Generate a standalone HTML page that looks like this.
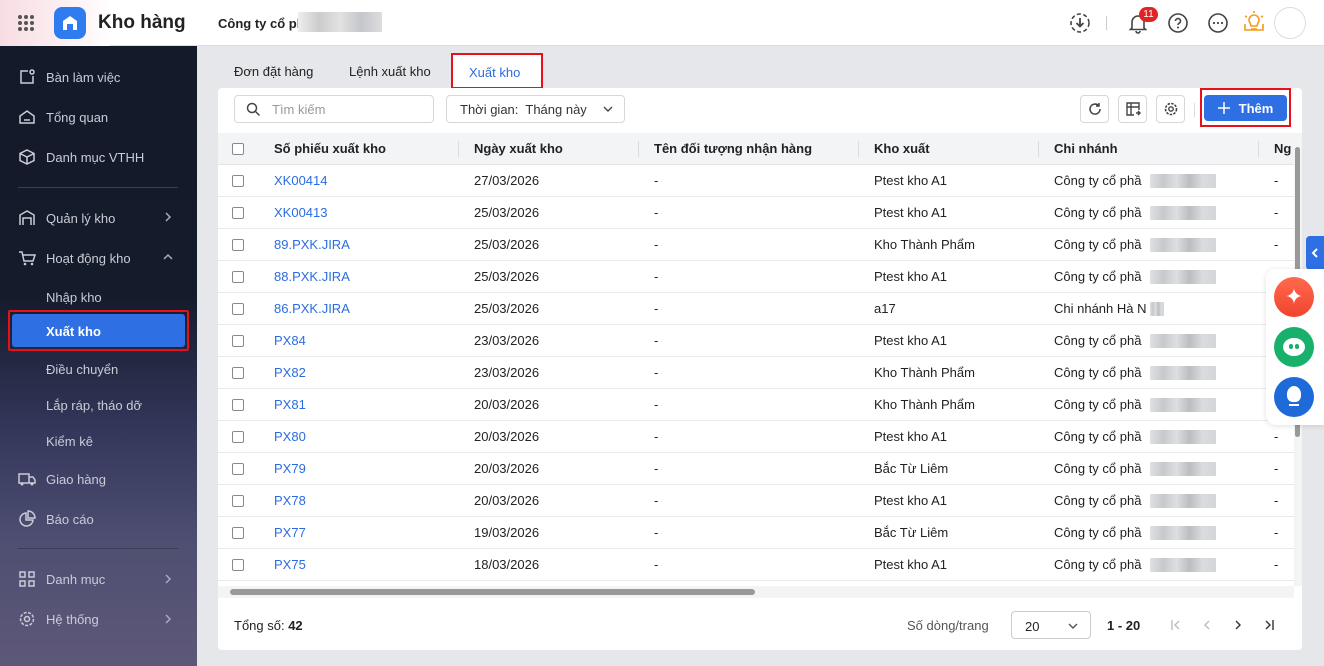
<!DOCTYPE html>
<html><head><meta charset="utf-8"><style>
*{box-sizing:border-box;margin:0;padding:0}
body{width:1324px;height:666px;overflow:hidden;font-family:"Liberation Sans","Noto Sans CJK SC",sans-serif;font-size:13px;color:#222;background:#e6e7ea;position:relative}
.top{position:absolute;left:0;top:0;width:1324px;height:46px;background:#fff;border-bottom:1px solid #ddd}
.blossom{position:absolute;left:0;top:0;width:110px;height:46px;background:linear-gradient(90deg,#f7dde3,#fdf3f5 70%,#fff)}
.side{position:absolute;left:0;top:46px;width:197px;height:620px;background:linear-gradient(180deg,#131a2a 0%,#141b2b 40%,#33375a 62%,#4e4f72 80%,#5e5878 100%)}
.si{position:absolute;left:18px;color:#c9ccd6;font-size:13px;display:flex;align-items:center}
.si svg{margin-right:10px}
.sub{position:absolute;left:46px;color:#c9ccd6;font-size:13px}
.hr{position:absolute;left:18px;width:160px;height:1px;background:#3a4052}
.chev{position:absolute;left:162px}
.card{position:absolute;left:218px;top:88px;width:1084px;height:562px;background:#fff;border-radius:4px}
.th{position:absolute;left:0;top:45px;width:1076px;height:32px;background:#f3f4f6;border-bottom:1px solid #e3e4e8;font-weight:bold}
.row{position:absolute;left:0;width:1076px;height:32px;border-bottom:1px solid #e8e9ec}
.c{position:absolute;top:8px;white-space:nowrap}
.cb{position:absolute;left:14px;top:10px;width:12px;height:12px;border:1px solid #888;border-radius:2px;background:#fff}
.blue{color:#2b6de0}
.blur{position:absolute;left:932px;width:66px;height:14px;top:9px;background:linear-gradient(90deg,#d8d9dc,#b9bbbf 20%,#d4d6da 40%,#aaadb2 60%,#d1d3d6 80%,#c9cbcf);opacity:.8}
.btn{position:absolute;top:7px;width:29px;height:28px;border:1px solid #d5d7db;border-radius:4px;display:flex;align-items:center;justify-content:center}
.tab{position:absolute;top:64px;font-size:13px;color:#222}
</style></head><body>
<div class="top">
 <div class="blossom"></div>
 <div style="position:absolute;left:18px;top:15px;width:16px;height:16px;display:grid;grid-template-columns:repeat(3,4px);gap:2px">
  <i style="background:#555;border-radius:50%"></i><i style="background:#555;border-radius:50%"></i><i style="background:#555;border-radius:50%"></i><i style="background:#555;border-radius:50%"></i><i style="background:#555;border-radius:50%"></i><i style="background:#555;border-radius:50%"></i><i style="background:#555;border-radius:50%"></i><i style="background:#555;border-radius:50%"></i><i style="background:#555;border-radius:50%"></i></div>
 <div style="position:absolute;left:54px;top:7px;width:32px;height:32px;border-radius:8px;background:#2f7bf0">
  <svg width="32" height="32" viewBox="0 0 32 32"><path d="M9 23V14l7-5 7 5v9h-4v-6h-6v6z" fill="#fff"/></svg></div>
 <div style="position:absolute;left:98px;top:12px;font-size:19px;font-weight:bold;color:#222">Kho hàng</div>
 <div style="position:absolute;left:218px;top:16px;font-size:13px;font-weight:bold">Công ty cổ pl</div>
 <div style="position:absolute;left:298px;top:12px;width:84px;height:20px;background:linear-gradient(90deg,#eee,#ccc 25%,#e2e2e2 50%,#c4c6ca 75%,#ddd)"></div>
 <svg style="position:absolute;left:1069px;top:12px" width="22" height="22" viewBox="0 0 22 22"><circle cx="11" cy="11" r="9" fill="none" stroke="#444" stroke-width="1.6" stroke-dasharray="4 2.5"/><path d="M11 6v8M7.5 11l3.5 3.5 3.5-3.5" fill="none" stroke="#444" stroke-width="1.8"/></svg>
 <div style="position:absolute;left:1106px;top:16px;width:1px;height:14px;background:#ccc"></div>
 <svg style="position:absolute;left:1127px;top:12px" width="22" height="22" viewBox="0 0 22 22"><path d="M5 16V10a6 6 0 0 1 12 0v6l1.5 1.5h-15zM9 19a2 2 0 0 0 4 0" fill="none" stroke="#444" stroke-width="1.6"/></svg>
 <div style="position:absolute;left:1139px;top:7px;width:19px;height:15px;border-radius:8px;background:#e02424;color:#fff;font-size:10px;text-align:center;line-height:15px">11</div>
 <svg style="position:absolute;left:1167px;top:12px" width="22" height="22" viewBox="0 0 22 22"><circle cx="11" cy="11" r="9" fill="none" stroke="#444" stroke-width="1.6"/><path d="M8.5 9a2.5 2.5 0 1 1 3.5 2.3c-.7.4-1 .9-1 1.7" fill="none" stroke="#444" stroke-width="1.6"/><circle cx="11" cy="15.5" r="1" fill="#444"/></svg>
 <svg style="position:absolute;left:1207px;top:12px" width="22" height="22" viewBox="0 0 22 22"><circle cx="11" cy="11" r="9" fill="none" stroke="#444" stroke-width="1.6"/><circle cx="7" cy="11" r="1.1" fill="#444"/><circle cx="11" cy="11" r="1.1" fill="#444"/><circle cx="15" cy="11" r="1.1" fill="#444"/></svg>
 <svg style="position:absolute;left:1243px;top:10px" width="22" height="24" viewBox="0 0 22 24"><path d="M7 13a5 5 0 1 1 8 0l-1 3H8z M8 19h6M2 6l2 1M20 6l-2 1M11 1v2M2 14v6h18v-6" fill="none" stroke="#f29b18" stroke-width="1.6"/></svg>
 <div style="position:absolute;left:1274px;top:7px;width:32px;height:32px;border-radius:50%;border:1px solid #ddd;background:#fff"></div>
</div>

<div class="side">
 <div class="si" style="top:22px"><svg width="18" height="18" viewBox="0 0 18 18"><path d="M10 3H3v12h12V8" fill="none" stroke="#c9ccd6" stroke-width="1.5"/><circle cx="14" cy="4" r="2" fill="none" stroke="#c9ccd6" stroke-width="1.5"/></svg>Bàn làm việc</div>
 <div class="si" style="top:62px"><svg width="18" height="18" viewBox="0 0 18 18"><path d="M2 8l7-5 7 5v7H2zM6 12h6" fill="none" stroke="#c9ccd6" stroke-width="1.5"/></svg>Tổng quan</div>
 <div class="si" style="top:102px"><svg width="18" height="18" viewBox="0 0 18 18"><path d="M9 2l7 3.5v7L9 16l-7-3.5v-7zM2 5.5L9 9l7-3.5M9 9v7" fill="none" stroke="#c9ccd6" stroke-width="1.5"/></svg>Danh mục VTHH</div>
 <div class="hr" style="top:141px"></div>
 <div class="si" style="top:163px"><svg width="18" height="18" viewBox="0 0 18 18"><path d="M2 16V6l7-4 7 4v10M5 16V9h8v7" fill="none" stroke="#c9ccd6" stroke-width="1.5"/></svg>Quản lý kho</div>
 <svg class="chev" style="top:165px" width="12" height="12" viewBox="0 0 12 12"><path d="M4 2l4 4-4 4" fill="none" stroke="#aab" stroke-width="1.5"/></svg>
 <div class="si" style="top:203px"><svg width="18" height="18" viewBox="0 0 18 18"><path d="M1 3h3l2 9h9l2-6H5" fill="none" stroke="#c9ccd6" stroke-width="1.5"/><circle cx="7" cy="15" r="1.3" fill="#c9ccd6"/><circle cx="14" cy="15" r="1.3" fill="#c9ccd6"/></svg>Hoạt động kho</div>
 <svg class="chev" style="top:205px" width="12" height="12" viewBox="0 0 12 12"><path d="M2 8l4-4 4 4" fill="none" stroke="#aab" stroke-width="1.5"/></svg>
 <div class="sub" style="top:244px">Nhập kho</div>
 <div style="position:absolute;left:8px;top:264px;width:181px;height:41px;border:2px solid #e8101a;border-radius:2px"><div style="position:absolute;left:2px;top:2px;right:2px;bottom:2px;background:#2f6fe4;border-radius:3px;color:#fff;font-weight:bold;padding:10px 0 0 34px">Xuất kho</div></div>
 <div class="sub" style="top:316px">Điều chuyển</div>
 <div class="sub" style="top:352px">Lắp ráp, tháo dỡ</div>
 <div class="sub" style="top:388px">Kiểm kê</div>
 <div class="si" style="top:424px"><svg width="18" height="18" viewBox="0 0 18 18"><path d="M1 4h10v9H1zM11 7h4l2 3v3h-6" fill="none" stroke="#c9ccd6" stroke-width="1.5"/><circle cx="4" cy="14" r="1.5" fill="#c9ccd6"/><circle cx="14" cy="14" r="1.5" fill="#c9ccd6"/></svg>Giao hàng</div>
 <div class="si" style="top:464px"><svg width="18" height="18" viewBox="0 0 18 18"><path d="M8 3a6.5 6.5 0 1 0 7 7H8zM10 1v7h7a7 7 0 0 0-7-7z" fill="none" stroke="#c9ccd6" stroke-width="1.5"/></svg>Báo cáo</div>
 <div class="hr" style="top:502px"></div>
 <div class="si" style="top:524px"><svg width="18" height="18" viewBox="0 0 18 18"><rect x="2" y="2" width="5" height="5" fill="none" stroke="#c9ccd6" stroke-width="1.5"/><rect x="11" y="2" width="5" height="5" fill="none" stroke="#c9ccd6" stroke-width="1.5"/><rect x="2" y="11" width="5" height="5" fill="none" stroke="#c9ccd6" stroke-width="1.5"/><rect x="11" y="11" width="5" height="5" fill="none" stroke="#c9ccd6" stroke-width="1.5"/></svg>Danh mục</div>
 <svg class="chev" style="top:527px" width="12" height="12" viewBox="0 0 12 12"><path d="M4 2l4 4-4 4" fill="none" stroke="#aab" stroke-width="1.5"/></svg>
 <div class="si" style="top:564px"><svg width="18" height="18" viewBox="0 0 18 18"><circle cx="9" cy="9" r="2.5" fill="none" stroke="#c9ccd6" stroke-width="1.5"/><circle cx="9" cy="9" r="6.5" fill="none" stroke="#c9ccd6" stroke-width="1.5" stroke-dasharray="3 1.5"/></svg>Hệ thống</div>
 <svg class="chev" style="top:567px" width="12" height="12" viewBox="0 0 12 12"><path d="M4 2l4 4-4 4" fill="none" stroke="#aab" stroke-width="1.5"/></svg>
</div>

<div class="tab" style="left:234px">Đơn đặt hàng</div>
<div class="tab" style="left:349px">Lệnh xuất kho</div>
<div style="position:absolute;left:451px;top:53px;width:92px;height:36px;border:2px solid #e8101a;background:#fff"><div style="color:#2b6de0;position:absolute;left:16px;top:10px">Xuất kho</div></div>

<div class="card">
 <div style="position:absolute;left:16px;top:7px;width:200px;height:28px;border:1px solid #d5d7db;border-radius:4px">
  <svg style="position:absolute;left:11px;top:6px" width="15" height="15" viewBox="0 0 15 15"><circle cx="6" cy="6" r="4.5" fill="none" stroke="#444" stroke-width="1.5"/><path d="M9.5 9.5l4 4" stroke="#444" stroke-width="1.5"/></svg>
  <span style="position:absolute;left:37px;top:6px;color:#999">Tìm kiếm</span></div>
 <div style="position:absolute;left:228px;top:7px;width:179px;height:28px;border:1px solid #d5d7db;border-radius:4px;padding:6px 0 0 13px;color:#333">Thời gian:&nbsp; Tháng này
  <svg style="position:absolute;right:11px;top:9px" width="10" height="8" viewBox="0 0 10 8"><path d="M1 2l4 4 4-4" fill="none" stroke="#444" stroke-width="1.4"/></svg></div>
 <div class="btn" style="left:862px"><svg width="16" height="16" viewBox="0 0 16 16"><path d="M13 8a5 5 0 1 1-1.5-3.5M12 2v3h-3" fill="none" stroke="#444" stroke-width="1.5"/></svg></div>
 <div class="btn" style="left:900px"><svg width="16" height="16" viewBox="0 0 16 16"><path d="M9 14H2V2h12v7M2 6h12M6 2v12M11 12h4M13 10l2 2-2 2" fill="none" stroke="#444" stroke-width="1.4"/></svg></div>
 <div class="btn" style="left:938px"><svg width="16" height="16" viewBox="0 0 16 16"><circle cx="8" cy="8" r="2.2" fill="none" stroke="#444" stroke-width="1.4"/><circle cx="8" cy="8" r="5.5" fill="none" stroke="#444" stroke-width="1.6" stroke-dasharray="2.5 1.2"/></svg></div>
 <div style="position:absolute;left:976px;top:15px;width:1px;height:14px;background:#ddd"></div>
 <div style="position:absolute;left:982px;top:0;width:91px;height:39px;border:2px solid #e8101a"><div style="position:absolute;left:2px;top:5px;width:83px;height:26px;background:#2f6fe4;border-radius:4px;color:#fff;font-weight:bold;display:flex;align-items:center;justify-content:center;gap:9px"><svg width="12" height="12" viewBox="0 0 12 12"><path d="M6 0v12M0 6h12" stroke="#fff" stroke-width="1.5"/></svg><span>Thêm</span></div></div>

 <div class="th"><div class="cb"></div>
  <div class="c" style="left:56px">Số phiếu xuất kho</div>
  <div class="c" style="left:256px">Ngày xuất kho</div>
  <div class="c" style="left:436px">Tên đối tượng nhận hàng</div>
  <div class="c" style="left:656px">Kho xuất</div>
  <div class="c" style="left:836px">Chi nhánh</div>
  <div class="c" style="left:1056px">Ng</div>
  <div style="position:absolute;left:240px;top:8px;width:1px;height:16px;background:#ddd"></div>
  <div style="position:absolute;left:420px;top:8px;width:1px;height:16px;background:#ddd"></div>
  <div style="position:absolute;left:640px;top:8px;width:1px;height:16px;background:#ddd"></div>
  <div style="position:absolute;left:820px;top:8px;width:1px;height:16px;background:#ddd"></div>
  <div style="position:absolute;left:1040px;top:8px;width:1px;height:16px;background:#ddd"></div>
 </div>
 <div id="rows"></div>
 <div style="position:absolute;left:1076px;top:45px;width:8px;height:453px;background:#f4f4f4"><div style="position:absolute;left:1px;top:14px;width:5px;height:290px;background:#999;border-radius:3px"></div></div>
 <div style="position:absolute;left:0;top:498px;width:1076px;height:12px;background:#f4f4f4"><div style="position:absolute;left:12px;top:3px;width:525px;height:6px;background:#999;border-radius:3px"></div></div>
 <div style="position:absolute;left:16px;top:530px">Tổng số: <b>42</b></div>
 <div style="position:absolute;left:689px;top:530px;color:#555">Số dòng/trang</div>
 <div style="position:absolute;left:793px;top:523px;width:80px;height:28px;border:1px solid #ccc;border-radius:4px;padding:7px 0 0 13px">20<svg style="position:absolute;right:12px;top:10px" width="10" height="8" viewBox="0 0 10 8"><path d="M1 2l4 4 4-4" fill="none" stroke="#555" stroke-width="1.4"/></svg></div>
 <div style="position:absolute;left:889px;top:530px;font-weight:bold">1 - 20</div>
 <svg style="position:absolute;left:952px;top:531px" width="12" height="12" viewBox="0 0 12 12"><path d="M2 1v10M9 2L5 6l4 4" fill="none" stroke="#bbb" stroke-width="1.4"/></svg>
 <svg style="position:absolute;left:983px;top:531px" width="12" height="12" viewBox="0 0 12 12"><path d="M8 2L4 6l4 4" fill="none" stroke="#bbb" stroke-width="1.4"/></svg>
 <svg style="position:absolute;left:1014px;top:531px" width="12" height="12" viewBox="0 0 12 12"><path d="M4 2l4 4-4 4" fill="none" stroke="#333" stroke-width="1.4"/></svg>
 <svg style="position:absolute;left:1045px;top:531px" width="12" height="12" viewBox="0 0 12 12"><path d="M3 2l4 4-4 4M10 1v10" fill="none" stroke="#333" stroke-width="1.4"/></svg>
</div>

<div style="position:absolute;left:1306px;top:236px;width:18px;height:34px;background:#2f6fe4;border-radius:4px 0 0 4px"><svg style="position:absolute;left:4px;top:11px" width="10" height="12" viewBox="0 0 10 12"><path d="M7 2L3 6l4 4" fill="none" stroke="#fff" stroke-width="2"/></svg></div>
<div style="position:absolute;left:1266px;top:269px;width:58px;height:156px;background:#fff;border-radius:10px 0 0 10px;box-shadow:0 1px 6px rgba(0,0,0,.12)">
 <div style="position:absolute;left:8px;top:8px;width:40px;height:40px;border-radius:50%;background:linear-gradient(#ff6a4d,#f0442f);color:#fff;font-size:22px;text-align:center;line-height:40px">✦</div>
 <div style="position:absolute;left:8px;top:58px;width:40px;height:40px;border-radius:50%;background:#18b06a"><div style="position:absolute;left:9px;top:11px;width:22px;height:18px;border-radius:50%;background:#fff"></div><div style="position:absolute;left:15px;top:17px;width:4px;height:5px;background:#18b06a;border-radius:2px"></div><div style="position:absolute;left:21px;top:17px;width:4px;height:5px;background:#18b06a;border-radius:2px"></div></div>
 <div style="position:absolute;left:8px;top:108px;width:40px;height:40px;border-radius:50%;background:#1d6ad8"><div style="position:absolute;left:13px;top:9px;width:14px;height:16px;border-radius:50% 50% 40% 40%;background:#fff"></div><div style="position:absolute;left:15px;top:27px;width:10px;height:2px;background:#fff"></div></div>
</div>

<script>
var d=[["XK00414","27/03/2026","Ptest kho A1",1],["XK00413","25/03/2026","Ptest kho A1",1],["89.PXK.JIRA","25/03/2026","Kho Thành Phẩm",1],["88.PXK.JIRA","25/03/2026","Ptest kho A1",1],["86.PXK.JIRA","25/03/2026","a17",0],["PX84","23/03/2026","Ptest kho A1",1],["PX82","23/03/2026","Kho Thành Phẩm",1],["PX81","20/03/2026","Kho Thành Phẩm",1],["PX80","20/03/2026","Ptest kho A1",1],["PX79","20/03/2026","Bắc Từ Liêm",1],["PX78","20/03/2026","Ptest kho A1",1],["PX77","19/03/2026","Bắc Từ Liêm",1],["PX75","18/03/2026","Ptest kho A1",1]];
var h="";d.forEach(function(r,i){h+='<div class="row" style="top:'+(77+i*32)+'px"><div class="cb"></div><div class="c blue" style="left:56px">'+r[0]+'</div><div class="c" style="left:256px">'+r[1]+'</div><div class="c" style="left:436px">-</div><div class="c" style="left:656px">'+r[2]+'</div>'+(r[3]?'<div class="c" style="left:836px">Công ty cổ phầ</div><div class="blur"></div>':'<div class="c" style="left:836px">Chi nhánh Hà N</div><div class="blur" style="width:14px"></div>')+'<div class="c" style="left:1056px">-</div></div>'});
document.getElementById("rows").innerHTML=h;
</script>
</body></html>
